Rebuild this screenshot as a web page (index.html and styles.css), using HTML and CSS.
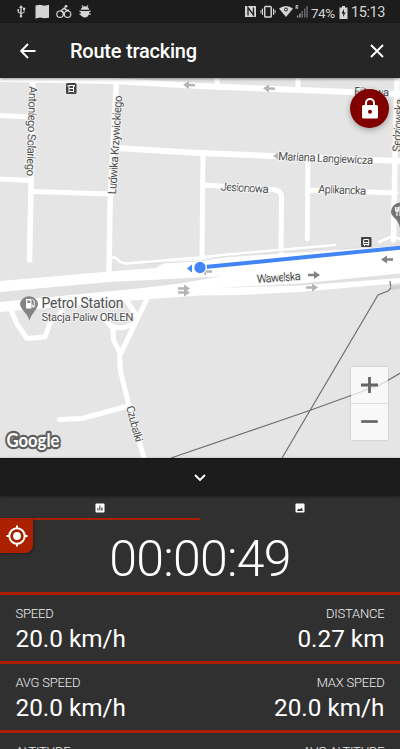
FILE: index.html
```html
<!DOCTYPE html>
<html lang="en">
<head>
<meta charset="utf-8">
<title>Route tracking</title>
<link rel="stylesheet" href="styles.css">
</head>
<body>
<main class="app">
  <div class="status">
    <svg class="status-left" width="100" height="24" fill="#d4d4d4" stroke="none">
      <path d="M21 5l2 3h-1.300v5l2-1v-2h-.7V7.800h2.200V10h-.7v2.500l-2.800 1.500v1a1.300 1.300 0 1 1-1.400 0v-1.200l-2.700-1.500v-1.500a1 1 0 1 1 1.200 0v1l1.500.8V8H19z"/>
      <path d="M35.500 5.500l4.500-.7 4.500 1 4.500-1v13l-4.500.5-4.500-.8-4.500 1z"/>
      <g fill="none" stroke="#d4d4d4" stroke-width="1.200"><circle cx="60" cy="14.200" r="3.200"/><circle cx="67.600" cy="14.200" r="3.200"/><path d="M63.700 15.500v-3l-2.300-2 3-2.500 2 2.300h2.600" stroke-width="1.500"/></g><circle cx="66" cy="6.300" r="1.400"/>
      <path d="M80.700 9.800a3.900 3.900 0 0 1 1.900-2.800L81.600 5.600l.6-.5 1.300 1.400a4 4 0 0 1 3 0l1.300-1.400.6.500-1 1.400a3.900 3.900 0 0 1 1.900 2.800zM79.500 10.500l2 .5h7l2-.5v1.200l-1.500.8v1h1.700v1.200h-2a4.200 4.200 0 0 1-7.400 1h-.4l-.5-1h-.9v-1.200h1.500v-1l-1.500-.8z"/>
    </svg>
    <div class="status-right">
      <svg width="66" height="24" viewBox="243 0 66 24" fill="#d4d4d4">
        <path d="M245 6h11v11h-11z"/><path d="M248 15.500v-8l5.500 7.500V7.500" fill="none" stroke="#1c1c1c" stroke-width="1.300"/>
        <g fill="none" stroke="#d4d4d4" stroke-width="1.500"><rect x="264.700" y="6.500" width="6.500" height="10.500" rx=".8"/><path d="M262.500 8.500v6.500M273.500 8.500v6.500M261 10v3.500M275 10v3.500" stroke-width="1"/></g>
        <path d="M279 8.500q7-5 14 0l-7 8.500z"/><circle cx="286" cy="9.500" r="1.500" fill="none" stroke="#1c1c1c"/>
        <path d="M296 9V5.500h1.800v1.700H296l2 1.800" fill="none" stroke="#d4d4d4" stroke-width=".8"/>
        <path d="M297 15.500h1.200v2H297zM299.300 13.500h1.300v4h-1.300z" fill="#aaa"/><path d="M301.500 11h1.500v6.500h-1.500zM304 8.500h1.500v9H304zM306.300 6h1.500v11.500h-1.500z" fill="#666"/>
      </svg>
      <span class="battery-text">74%</span>
      <svg class="battery" width="9" height="13" viewBox="0 0 9 13"><path d="M3 0h3v1.500h2.500V13H.5V1.500H3z" fill="#d4d4d4"/><path d="M5 3L2.500 7.500h1.700L4 11l2.600-4.500H5z" fill="#1c1c1c"/></svg>
      <span class="clock">15:13</span>
    </div>
  </div>

  <header class="bar">
    <svg class="back" width="16" height="16" viewBox="0 0 16 16"><path d="M15.500 8H1.500M8 1L1.200 8 8 15" fill="none" stroke="#fff" stroke-width="1.900"/></svg>
    <h1 class="title">Route tracking</h1>
    <svg class="close" width="14" height="14" viewBox="0 0 14 14"><path d="M1 1l12 12M13 1L1 13" stroke="#fff" stroke-width="1.900"/></svg>
  </header>

  <section class="map">
    <svg class="canvas" width="400" height="380" viewBox="0 78 400 380">
      <defs>
        <path id="arrow" d="M-6 -1.200H0V-4L6 0 0 4V1.200H-6z"/>
      </defs>
      <g class="road">
        <path stroke-width="6" d="M0 79L110 81 200 86 400 94M116 148L200 153 400 161"/>
        <path stroke-width="5.500" d="M33 78L31 191M31 188L29.500 260M116.500 80L110 205 109 275M397 78L395 160 393.500 240"/>
        <path stroke-width="5" d="M0 115.500L31 117M0 179L30 180.500M31 191.500L110 194M203 153L202 258M204 185L272 189.500Q281.500 190 281.500 197L281 254M308 157L307.300 239M308 190L396 193M217 78V87M298 78V90"/>
        <path stroke-width="2.500" d="M110 257.500H115C119 260 118 263 126 263.500L200 257.500 222 255 335 245M379 242L393 236 402 240"/>
        <path stroke-width="5" d="M11 310L17 324 27 338.500 45 337 50 323 62 312M147 299L119.500 356 120.500 371 128.500 404 144 458M104 318L113 329 113.500 340 119.500 352M126 300L137 316M112 326Q120 330 131 325M59.500 419.500L82 418.500 128 406"/>
      </g>
      <path fill="#fff" d="M0 281L109 271.500 156 268 166 262 200 259 400 246V283L300 292 240 295 200 295.500 150 299 80 305 0 312z"/>
      <path fill="#e1e1e1" d="M0 292L109 282 200 277.500 221 276.300 180 283.500 133 289 60 296 0 302zM216 288L300 283.500 400 273.500V278L300 285.500z"/>
      <path class="line thin" d="M145 264L200 261 230 256M240 255L334 247.500M340 249L378 245"/>
      <path class="line" d="M390 281L391 288 388 291 378 295 282 458M171 458L311 410 380 385 402 372"/>
      <path fill="#d0d0d0" d="M391 286l9-1v4l-9 1z"/>

      <g fill="#b4b4b4">
        <use href="#arrow" transform="translate(189 85) rotate(182)"/>
        <use href="#arrow" transform="translate(269 88.500) rotate(182)"/>
        <path d="M273 156l5-3.500v7z"/>
        <use href="#arrow" transform="translate(184 288.500)"/><use href="#arrow" transform="translate(184 292.500)"/>
        <use href="#arrow" transform="translate(312 287.500)"/>
        <use href="#arrow" transform="translate(206 271.500) rotate(180)"/>
      </g>
      <g fill="#828282"><use href="#arrow" transform="translate(314 275)"/><use href="#arrow" transform="translate(387 259.500) rotate(180)"/></g>

      <g class="label">
        <text transform="translate(29 86) rotate(91.500)" textLength="90">Antoniego Solariego</text>
        <text transform="translate(116 194.500) rotate(-86.500)" textLength="99">Ludwika Krzywickiego</text>
        <text transform="translate(278 160) rotate(2.500)" textLength="95">Mariana Langiewicza</text>
        <text transform="translate(220.500 190.500) rotate(3)" textLength="48">Jesionowa</text>
        <text transform="translate(318 193) rotate(2)" textLength="48">Aplikancka</text>
        <text transform="translate(257 283) rotate(-4)" textLength="44">Wawelska</text>
        <text transform="translate(354 95) rotate(2)" textLength="35">Filtrowa</text>
        <text transform="translate(400.500 152) rotate(-87)" textLength="53">Sędziowska</text>
        <text transform="translate(126 407) rotate(75)" textLength="37">Czubatki</text>
        <text class="poi" x="41.500" y="308" textLength="82">Petrol Station</text>
        <text x="41.500" y="321" textLength="92">Stacja Paliw ORLEN</text>
      </g>

      <rect x="66" y="83" width="10.500" height="11" rx="1.500" fill="#424242"/><path d="M69 85.500h4.500v6H69zM69 88.500h4.500M68 85v1.500M74.500 85v1.500M69.500 91l-1 1.500M73 91l1 1.500" fill="none" stroke="#fff"/>
      <rect x="361" y="237" width="10.500" height="10" rx="1" fill="#424242"/><path d="M363.700 239.500h5v5h-5zM363.500 242.500h5.500M364.500 244v2M368 244v2" fill="none" stroke="#fff"/>
      <path fill="#858585" d="M29.500 321C28 313 20 310 20 303.500A9.200 9.200 0 0 1 38 303.500C38 310 31 313 29.500 321z"/>
      <path fill="#fff" d="M26 299h5.500v9.500H26z"/><path d="M27.300 300.500h3v2.500h-3z" fill="#858585"/><path d="M31.500 305h1.200v2h1.500v-6l-1.700-1.800" fill="none" stroke="#fff"/>
      <path fill="#757575" d="M400 228C399 219 391 217 391 212A9.500 9.500 0 0 1 410 212C410 217 402 219 400 228z"/><path d="M395.500 207v3q0 1.500 1.500 1.500t1.500-1.500v-3M397 207v9M400 206v10" fill="none" stroke="#fff" stroke-width="1.100"/>

      <path d="M200 267.500L402 247.500" stroke="#4285f4" stroke-width="4"/>
      <circle cx="200" cy="267.500" r="6.300" fill="#4285f4" stroke="#fff" stroke-width="1.300"/>
      <path fill="#4285f4" d="M187 268.500l5-4v8z"/>
      <text class="google" x="6.500" y="446.500" textLength="53" lengthAdjust="spacingAndGlyphs">Google</text>
    </svg>
    <button class="lock" aria-label="Lock">
      <svg width="16" height="21" viewBox="0 0 16 21"><path d="M4 8V5a4 4 0 0 1 8 0v3" fill="none" stroke="#fff" stroke-width="2"/><rect y="7" width="16" height="13.500" rx="1.600" fill="#fff"/><circle cx="8" cy="13.700" r="2" fill="#800000"/></svg>
    </button>
    <div class="zoom">
      <svg width="37" height="36" viewBox="0 0 37 36"><path d="M10 18h17M18.500 10v16" stroke="#666" stroke-width="2.800"/></svg>
      <svg class="minus" width="37" height="37" viewBox="0 0 37 37"><path d="M10 18h17" stroke="#666" stroke-width="2.800"/></svg>
    </div>
  </section>

  <div class="handle"><svg width="12" height="8" viewBox="0 0 12 8"><path d="M1 1l5 5 5-5" fill="none" stroke="#fff" stroke-width="1.900"/></svg></div>

  <section class="panel">
    <nav class="tabs">
      <div class="tab active"><svg width="10" height="10" viewBox="0 0 10 10"><rect x=".5" y=".5" width="9" height="9" rx=".8" fill="#fff"/><path d="M2 5h1.500v2.500H2zM4 2.500h1.500v5H4zM6 4.500h1.800v3H6z" fill="#777"/></svg></div>
      <div class="tab"><svg width="10" height="10" viewBox="0 0 10 10"><rect x=".5" y=".5" width="9" height="9" rx=".8" fill="#fff"/><path d="M2 8l1.500-2.500L5 6.500l1.500-2L8 8z" fill="#303030"/></svg></div>
    </nav>
    <div class="timer">
      <time>00:00:49</time>
      <button class="locate" aria-label="Center on position"><svg width="22" height="22" viewBox="0 0 22 22"><g fill="none" stroke="#fff" stroke-width="2"><circle cx="11" cy="11" r="7.700"/><path d="M11 .5v3M11 18.500v3M.5 11h3M18.500 11h3"/></g><circle cx="11" cy="11" r="3.900" fill="#fff"/></svg></button>
    </div>
    <div class="row"><div class="cell"><span class="name">SPEED</span><span class="value">20.0 km/h</span></div><div class="cell"><span class="name">DISTANCE</span><span class="value">0.27 km</span></div></div>
    <div class="row"><div class="cell"><span class="name">AVG SPEED</span><span class="value">20.0 km/h</span></div><div class="cell"><span class="name">MAX SPEED</span><span class="value">20.0 km/h</span></div></div>
    <div class="row"><div class="cell"><span class="name">ALTITUDE</span></div><div class="cell"><span class="name">AVG ALTITUDE</span></div></div>
  </section>
</main>
</body>
</html>
```

FILE: styles.css
```css
* { box-sizing: border-box; }
html, body { margin: 0; height: 749px; overflow: hidden; }
body { font-family: Roboto, "Noto Sans", sans-serif; background: #303030; color: #fff; }
svg { display: block; flex: none; }
button { border: 0; padding: 0; display: flex; align-items: center; justify-content: center; }
.app { width: 400px; height: 749px; overflow: hidden; display: flex; flex-direction: column; }
.status { height: 23px; flex: none; background: #1c1c1c; display: flex; justify-content: space-between; color: #d4d4d4; }
.status-right { display: flex; align-items: center; padding-right: 15px; }
.battery-text { font-size: 13.500px; width: 28px; margin: 2px 0 0 2px; white-space: nowrap; letter-spacing: -.5px; }
.battery { margin: 1px 3px 0 0; }
.clock { font-size: 14.500px; width: 34px; margin-top: 2px; letter-spacing: -.4px; white-space: nowrap; }
.bar { height: 55px; flex: none; background: #262626; display: flex; align-items: center; padding: 0 16px 0 20px; position: relative; z-index: 1; box-shadow: 0 1px 3px rgba(0,0,0,.45); }
.title { margin: 1px 0 0 34px; font-size: 20px; font-weight: 500; flex: 1; letter-spacing: -.23px; }
.map { height: 380px; flex: none; position: relative; background: #e5e5e5; }
.road path { fill: none; stroke: #fff; stroke-linecap: round; stroke-linejoin: round; }
.line { fill: none; stroke: #707070; stroke-width: 1.200; }
.line.thin { stroke: #e0e0e0; stroke-width: 1; }
.label { font-size: 11.500px; fill: #505050; stroke: #f4f4f4; stroke-width: 2px; paint-order: stroke; stroke-linejoin: round; }
.label .poi { font-size: 14px; }
.google { font-family: Lato, sans-serif; font-size: 19px; font-weight: 700; fill: #fff; stroke: #606060; stroke-width: 4.500px; paint-order: stroke; stroke-linejoin: round; }
.lock { position: absolute; right: 11px; top: 11px; width: 39px; height: 39px; border-radius: 50%; background: #800000; box-shadow: 0 2px 6px rgba(0,0,0,.3); }
.zoom { position: absolute; right: 12px; top: 289px; width: 37px; height: 73px; background: rgba(255,255,255,.72); border-radius: 1px; box-shadow: 0 0 2px rgba(0,0,0,.25); }
.minus { border-top: 1px solid #ddd; }
.handle { height: 38px; flex: none; background: #1c1c1c; display: flex; align-items: center; justify-content: center; border-top: 1px solid #111; position: relative; box-shadow: 0 1px 3px rgba(0,0,0,.4); }
.panel { background: #303030; }
.tabs { display: flex; height: 24px; }
.tab { width: 200px; display: flex; justify-content: center; align-items: center; border-bottom: 2px solid transparent; padding-top: 2px; }
.tab.active { border-color: #ab2100; }
.timer { height: 72px; position: relative; display: flex; justify-content: center; align-items: center; }
.timer time { font-size: 50px; font-weight: 300; line-height: 60px; margin-top: 6px; letter-spacing: -.75px; }
.locate { position: absolute; left: 0; top: -2px; width: 33px; height: 35px; background: #ab2100; border-radius: 0 0 8px 0; box-shadow: 1px 1px 3px rgba(0,0,0,.3); }
.row { height: 69px; border-top: 3px solid #ab2100; padding: 11px 15.500px 0; display: flex; justify-content: space-between; }
.cell { display: flex; flex-direction: column; }
.cell:last-child { align-items: flex-end; }
.name { font-size: 13px; line-height: 16px; font-weight: 300; color: #eee; letter-spacing: -.2px; }
.value { font-size: 24.300px; line-height: 28px; margin-top: 3px; }
```
